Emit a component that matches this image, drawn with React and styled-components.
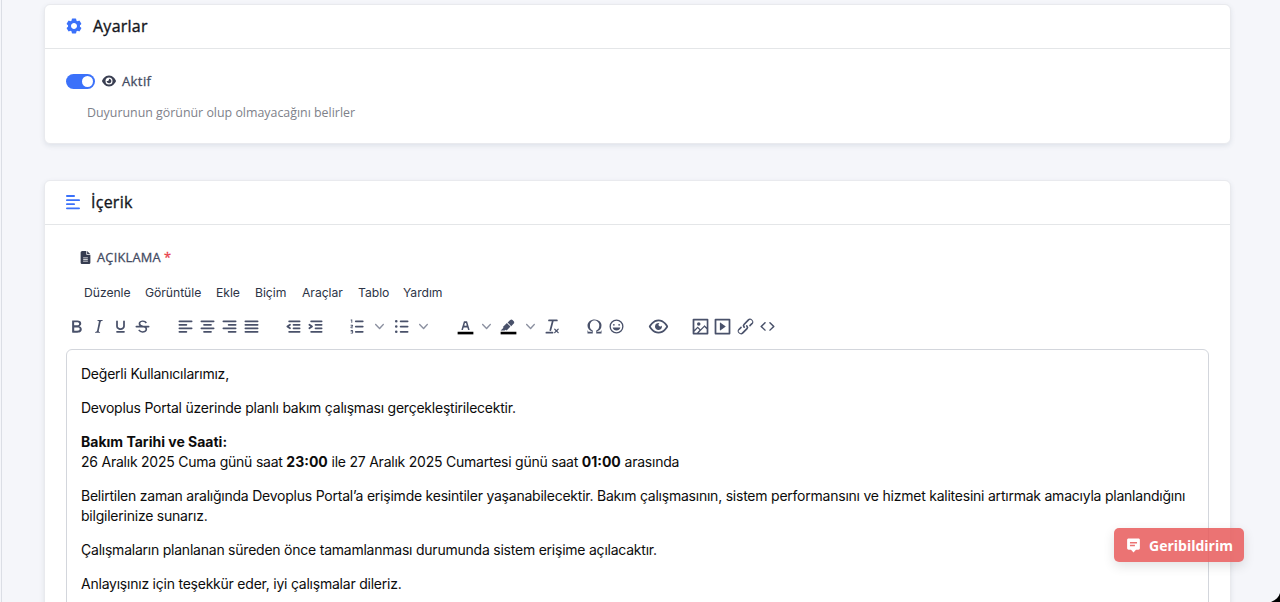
import React from 'react';
import styled, { createGlobalStyle } from 'styled-components';
import { BiSolidCog, BiSolidMessageAltDetail } from 'react-icons/bi';
import { FaEye, FaFileLines } from 'react-icons/fa6';

const GlobalStyle = createGlobalStyle`
  * {
    box-sizing: border-box;
  }

  body {
    margin: 0;
    background: #f5f6fa;
    font-family: 'Open Sans', sans-serif;
    overflow: hidden;
  }
`

const Page = styled.div`
  position: relative;
  height: 602px;
  overflow: hidden;
  padding: 4px 49px 0 42px;
  border-left: 1px solid #dbdee5;
  margin-left: 1px;
`

const Card = styled.section`
  height: ${props => props.$height}px;
  margin-bottom: 36px;
  background: #fff;
  border: 1px solid #e9eaee;
  border-radius: 6px;
  box-shadow: 0 2px 5px rgba(67, 89, 113, 0.12);
`

const CardHeader = styled.header`
  display: flex;
  align-items: center;
  gap: ${props => props.$gap}px;
  height: 44px;
  padding: 0 0 1px 20px;
  border-bottom: 1px solid #e4e6e8;
  color: #3b71fa;
`

const Title = styled.h5`
  margin: 0;
  color: #14161c;
  font-size: 16px;
  font-weight: 400;
  letter-spacing: 0.25px;
  -webkit-text-stroke: 0.35px currentColor;
`

const SwitchRow = styled.label`
  display: flex;
  align-items: center;
  height: 20px;
  margin: 22px 0 0 21px;
  color: #444b62;
  font-size: 13px;
  letter-spacing: 0.4px;
  -webkit-text-stroke: 0.3px currentColor;

  svg {
    margin: 0 6px 0 7px;
    color: #3a3f52;
  }
`

const Switch = styled.span`
  display: flex;
  justify-content: flex-end;
  width: 29px;
  height: 15px;
  padding: 2px;
  border-radius: 8px;
  background: #3b71fa;

  &::after {
    content: '';
    width: 11px;
    height: 11px;
    border-radius: 50%;
    background: #fff;
  }
`

const Hint = styled.p`
  margin: 13px 0 0 42px;
  color: #7e818a;
  font-size: 12.4px;
  line-height: 18px;
`

const FieldLabel = styled.div`
  display: flex;
  align-items: center;
  height: 20px;
  margin: 22px 0 0 34px;
  color: #444b62;
  font-size: 12.8px;
  letter-spacing: 0.25px;
  -webkit-text-stroke: 0.3px currentColor;

  svg {
    margin-right: 5px;
    color: #363c50;
  }

  span {
    margin-left: 3px;
    color: #e8414b;
  }
`

const MenuBar = styled.nav`
  display: flex;
  gap: 15px;
  margin: 16px 0 0 39px;
  color: #2d3446;
  font-family: Inter, sans-serif;
  font-size: 12.2px;
  line-height: 20px;
`

const MenuItem = styled.span`
  width: ${props => props.$width}px;
  white-space: nowrap;
  letter-spacing: -0.05px;
`

const Toolbar = styled.div`
  display: flex;
  align-items: center;
  height: 24px;
  margin: 11px 0 0 20.5px;
`

const ToolGroup = styled.div`
  display: flex;
  align-items: center;
  margin-right: ${props => props.$after}px;
`

const Tool = styled.span`
  display: flex;
  justify-content: center;
  width: 22.1px;
  color: #49516a;

  svg {
    flex: none;
  }
`

const Arrow = styled(Tool)`
  width: 21.4px;
  color: #8b90a0;
`

const Editor = styled.div`
  height: 300px;
  margin: 11px 21px 0;
  padding: 14px 14px;
  border: 1px solid #d3d6dc;
  border-radius: 6px;
  color: #0c0c0c;
  font-family: Inter, sans-serif;
  font-size: 14px;
  line-height: 20px;
`

const Paragraph = styled.p`
  margin: 0 0 14px;
`

const Line = styled.span`
  display: block;
  white-space: nowrap;
  letter-spacing: -0.23px;

  b {
    letter-spacing: 0;
  }
`

const Feedback = styled.button`
  position: absolute;
  right: 36px;
  bottom: 40px;
  display: flex;
  align-items: center;
  gap: 7px;
  width: 130px;
  height: 34px;
  padding: 0 0 0 11px;
  border: 0;
  border-radius: 5px;
  background: rgba(232, 92, 92, 0.86);
  box-shadow: 0 4px 12px rgba(0, 0, 0, 0.12);
  color: #fff;
  font-family: 'Open Sans', sans-serif;
  font-size: 14px;
  font-weight: 700;
`

const Corner = styled.svg`
  position: absolute;
  right: 0;
  bottom: 0;
`

const icons = {
  bold: 'M7.8 19c-.3 0-.5 0-.6-.2l-.2-.5V5.7c0-.2 0-.4.2-.5l.6-.2h5c1.5 0 2.7.3 3.5 1 .7.6 1.1 1.4 1.1 2.5a3 3 0 0 1-.6 1.9c-.4.6-1 1-1.6 1.2.4.1.9.3 1.3.6s.8.7 1 1.2c.4.4.5 1 .5 1.6 0 1.3-.4 2.3-1.3 3-.8.7-2.1 1-3.8 1H7.8Zm5-8.3c.6 0 1.2-.1 1.6-.5.4-.3.6-.7.6-1.3 0-1.1-.8-1.7-2.3-1.7H9.3v3.5h3.4Zm.5 6c.7 0 1.3-.1 1.7-.4.4-.4.6-.9.6-1.5s-.2-1-.7-1.4c-.4-.3-1-.4-2-.4H9.4v3.8h4Z',
  italic: 'm16.7 4.7-.1.9h-.3c-.6 0-1 0-1.4.3-.3.3-.4.6-.5 1.1l-2.1 9.8v.6c0 .5.4.8 1.4.8h.2l-.2.8H8l.2-.8h.2c1.1 0 1.8-.5 2-1.5l2-9.8.1-.5c0-.6-.4-.8-1.4-.8h-.3l.2-.9h5.8Z',
  underline: 'M16 5c.6 0 1 .4 1 1v5.5a4 4 0 0 1-.4 1.8l-1 1.4a5.3 5.3 0 0 1-5.5 1 5 5 0 0 1-1.6-1c-.5-.4-.8-.9-1.1-1.4a4 4 0 0 1-.4-1.8V6c0-.6.4-1 1-1s1 .4 1 1v5.5c0 .3 0 .6.2 1l.6.7a3.3 3.3 0 0 0 2.2.8 3.4 3.4 0 0 0 2.2-.8c.3-.2.4-.5.6-.8l.2-.9V6c0-.6.4-1 1-1ZM8 17h8c.6 0 1 .4 1 1s-.4 1-1 1H8a1 1 0 0 1 0-2Z',
  strike: 'M15.6 8.5c-.5-.7-1-1.1-1.3-1.3-.6-.4-1.3-.6-2-.6-2.7 0-2.8 1.7-2.8 2.1 0 1.6 1.8 2 3.2 2.3 4.4.9 4.6 2.8 4.6 3.9 0 1.4-.7 4.1-5 4.1A6.2 6.2 0 0 1 7 16.4l1.5-1.1c.4.6 1.6 2 3.7 2 1.6 0 2.5-.4 3-1.2.4-.8.3-2-.8-2.6-.7-.4-1.6-.7-2.9-1-1-.2-3.9-.8-3.9-3.6C7.6 6 10.3 5 12.4 5c2.9 0 4.2 1.6 4.7 2.4l-1.5 1.1Z M5 11h14a1 1 0 0 1 0 2H5a1 1 0 0 1 0-2Z',
  left: 'M5 5h14a1 1 0 0 1 0 2H5a1 1 0 1 1 0-2Zm0 4h8a1 1 0 0 1 0 2H5a1 1 0 1 1 0-2Zm0 8h8a1 1 0 0 1 0 2H5a1 1 0 0 1 0-2Zm0-4h14a1 1 0 0 1 0 2H5a1 1 0 0 1 0-2Z',
  center: 'M5 5h14a1 1 0 0 1 0 2H5a1 1 0 1 1 0-2Zm3 4h8a1 1 0 0 1 0 2H8a1 1 0 1 1 0-2Zm0 8h8a1 1 0 0 1 0 2H8a1 1 0 0 1 0-2Zm-3-4h14a1 1 0 0 1 0 2H5a1 1 0 0 1 0-2Z',
  right: 'M5 5h14a1 1 0 0 1 0 2H5a1 1 0 1 1 0-2Zm6 4h8a1 1 0 0 1 0 2h-8a1 1 0 0 1 0-2Zm0 8h8a1 1 0 0 1 0 2h-8a1 1 0 0 1 0-2Zm-6-4h14a1 1 0 0 1 0 2H5a1 1 0 0 1 0-2Z',
  justify: 'M5 5h14a1 1 0 0 1 0 2H5a1 1 0 1 1 0-2Zm0 4h14a1 1 0 0 1 0 2H5a1 1 0 1 1 0-2Zm0 4h14a1 1 0 0 1 0 2H5a1 1 0 0 1 0-2Zm0 4h14a1 1 0 0 1 0 2H5a1 1 0 0 1 0-2Z',
  outdent: 'M7 5h12a1 1 0 0 1 0 2H7a1 1 0 1 1 0-2Zm5 4h7a1 1 0 0 1 0 2h-7a1 1 0 0 1 0-2Zm0 4h7a1 1 0 0 1 0 2h-7a1 1 0 0 1 0-2Zm-5 4h12a1 1 0 0 1 0 2H7a1 1 0 0 1 0-2Zm1.6-3.8a1 1 0 0 1-1.2 1.6l-3-2a1 1 0 0 1 0-1.6l3-2a1 1 0 0 1 1.2 1.6L6.8 12l1.8 1.2Z',
  indent: 'M7 5h12a1 1 0 0 1 0 2H7a1 1 0 1 1 0-2Zm5 4h7a1 1 0 0 1 0 2h-7a1 1 0 0 1 0-2Zm0 4h7a1 1 0 0 1 0 2h-7a1 1 0 0 1 0-2Zm-5 4h12a1 1 0 0 1 0 2H7a1 1 0 0 1 0-2Zm-2.6-3.8L6.2 12l-1.8-1.2a1 1 0 0 1 1.2-1.6l3 2a1 1 0 0 1 0 1.6l-3 2a1 1 0 1 1-1.2-1.6Z',
  ordered: 'M10 17h8a1 1 0 0 1 0 2h-8a1 1 0 0 1 0-2Zm0-6h8a1 1 0 0 1 0 2h-8a1 1 0 0 1 0-2Zm0-6h8a1 1 0 0 1 0 2h-8a1 1 0 1 1 0-2ZM6 4v3.5c0 .3-.2.5-.5.5a.5.5 0 0 1-.5-.5V5h-.5a.5.5 0 0 1 0-1H6Zm-1 8.8.2.2h1.3c.3 0 .5.2.5.5s-.2.5-.5.5H4.9a1 1 0 0 1-.9-1V13c0-.4.3-.8.6-1l1.2-.4.2-.3a.2.2 0 0 0-.2-.2H4.5a.5.5 0 0 1-.5-.5c0-.3.2-.5.5-.5h1.6c.5 0 .9.4.9 1v.1c0 .4-.3.8-.6 1l-1.2.4-.2.3ZM7 17v2c0 .6-.4 1-1 1H4.5a.5.5 0 0 1 0-1h1.2c.2 0 .3-.1.3-.3 0-.2-.1-.3-.3-.3H4.4a.4.4 0 1 1 0-.8h1.3c.2 0 .3-.1.3-.3 0-.2-.1-.3-.3-.3H4.5a.5.5 0 1 1 0-1H6c.6 0 1 .4 1 1Z',
  bullets: 'M11 5h8a1 1 0 0 1 0 2h-8a1 1 0 0 1 0-2Zm0 6h8a1 1 0 0 1 0 2h-8a1 1 0 0 1 0-2Zm0 6h8a1 1 0 0 1 0 2h-8a1 1 0 0 1 0-2ZM4.5 6a1.5 1.5 0 1 1 3 0 1.5 1.5 0 0 1-3 0Zm0 6a1.5 1.5 0 1 1 3 0 1.5 1.5 0 0 1-3 0Zm0 6a1.5 1.5 0 1 1 3 0 1.5 1.5 0 0 1-3 0Z',
  color: 'M8.7 16h-.8a.5.5 0 0 1-.5-.6l2.7-9c.1-.3.3-.4.5-.4h2.8c.2 0 .4.1.5.4l2.7 9a.5.5 0 0 1-.5.6h-.8a.5.5 0 0 1-.4-.4l-.7-2.2c0-.3-.3-.4-.5-.4h-3.4c-.2 0-.4.1-.5.4l-.7 2.2c0 .3-.2.4-.4.4Zm2.6-7.6-.6 2a.5.5 0 0 0 .5.6h1.6a.5.5 0 0 0 .5-.6l-.6-2c0-.3-.3-.4-.5-.4h-.4c-.2 0-.4.1-.5.4Z',
  highlight: 'M7.7 16.7H3l3.3-3.3-.7-.8L10.2 8l4 4.1-4 4.2c-.2.2-.6.2-.8 0l-.6-.7-1.1 1.1Zm5-7.5L11 7.4l3-2.9a2 2 0 0 1 2.6 0L18 6c.7.7.7 2 0 2.7l-2.9 2.9-1.8-1.8-.6-.6Z',
  clear: 'M13.2 6a1 1 0 0 1 0 .2l-2.6 10a1 1 0 0 1-1 .8h-.2a.8.8 0 0 1-.8-1l2.6-10H8a1 1 0 1 1 0-2h9a1 1 0 0 1 0 2h-3.8ZM5 18h7a1 1 0 0 1 0 2H5a1 1 0 0 1 0-2Zm13 1.5L16.5 18 15 19.5a.7.7 0 0 1-1-1l1.5-1.5-1.5-1.5a.7.7 0 0 1 1-1l1.5 1.5 1.5-1.5a.7.7 0 0 1 1 1L17.5 17l1.5 1.5a.7.7 0 0 1-1 1Z',
  omega: 'M15 18h4l1-2v4h-6v-3.3l1.4-1a6 6 0 0 0 1.8-2.9 6.3 6.3 0 0 0-.1-4.1 5.8 5.8 0 0 0-3-3.2c-.6-.3-1.3-.5-2.1-.5a5.1 5.1 0 0 0-3.9 1.8 6.3 6.3 0 0 0-1.3 6 6.2 6.2 0 0 0 1.8 3l1.4.9V20H4v-4l1 2h4v-.5l-2-1L5.4 15A6.5 6.5 0 0 1 4 11c0-1 .2-1.9.6-2.7A7 7 0 0 1 6.3 6C7.1 5.4 8 5 9 4.5c1-.3 2-.5 3.1-.5a8.8 8.8 0 0 1 5.7 2 7 7 0 0 1 1.7 2.3 6 6 0 0 1 .2 4.8c-.2.7-.6 1.3-1 1.9a7.6 7.6 0 0 1-3.6 2.5v.5Z',
  emoji: 'M9 11c.6 0 1-.4 1-1s-.4-1-1-1a1 1 0 0 0-1 1c0 .6.4 1 1 1Zm6 0c.6 0 1-.4 1-1s-.4-1-1-1a1 1 0 0 0-1 1c0 .6.4 1 1 1Zm-3 5.5c2.1 0 4-1.5 4.4-3.5H7.6c.5 2 2.3 3.5 4.4 3.5ZM12 4a8 8 0 1 0 0 16 8 8 0 0 0 0-16Zm0 14.5a6.5 6.5 0 1 1 0-13 6.5 6.5 0 0 1 0 13Z',
  preview: 'M3.5 12.5c.5.8 1.1 1.6 1.8 2.3 2 2 4.2 3.2 6.7 3.2s4.7-1.2 6.7-3.2a16.2 16.2 0 0 0 2.1-2.8 15.7 15.7 0 0 0-2.1-2.8c-2-2-4.2-3.2-6.7-3.2a9.3 9.3 0 0 0-6.7 3.2A16.2 16.2 0 0 0 3.2 12c0 .2.2.3.3.5Zm-2.4-1 .7-1.2L4 7.8C6.2 5.4 8.9 4 12 4c3 0 5.8 1.4 8.1 3.8a18.2 18.2 0 0 1 2.8 3.7v1l-.7 1.2-2.1 2.5c-2.3 2.4-5 3.8-8.1 3.8-3 0-5.8-1.4-8.1-3.8a18.2 18.2 0 0 1-2.8-3.7 1 1 0 0 1 0-1Zm12-3.3a2 2 0 1 0 2.7 2.6 4 4 0 1 1-2.6-2.6Z',
  image: 'm5 15.7 3.3-3.2c.3-.3.7-.3 1 0L12 15l4.1-4c.3-.4.8-.4 1 0l2 1.9V5H5v10.7ZM5 18V19h3l2.8-2.9-2-2L5 17.9Zm14-3-2.5-2.4-6.4 6.5H19v-4ZM4 3h16c.6 0 1 .4 1 1v16c0 .6-.4 1-1 1H4a1 1 0 0 1-1-1V4c0-.6.4-1 1-1Zm6 8a2 2 0 1 0 0-4 2 2 0 0 0 0 4Z',
  media: 'M4 3h16c.6 0 1 .4 1 1v16c0 .6-.4 1-1 1H4a1 1 0 0 1-1-1V4c0-.6.4-1 1-1Zm1 2v14h14V5H5Zm4.8 2.6 5.6 4a.5.5 0 0 1 0 .8l-5.6 4A.5.5 0 0 1 9 16V8a.5.5 0 0 1 .8-.4Z',
  link: 'M6.2 12.3a1 1 0 0 1 1.4 1.4l-2 2a2 2 0 1 0 2.6 2.8l4.8-4.8a1 1 0 0 0 0-1.4 1 1 0 1 1 1.4-1.3 2.9 2.9 0 0 1 0 4L9.6 20a3.9 3.9 0 0 1-5.5-5.5l2-2Zm11.6-.6a1 1 0 0 1-1.4-1.4l2-2a2 2 0 1 0-2.6-2.8L11 10.3a1 1 0 0 0 0 1.4A1 1 0 1 1 9.6 13a2.9 2.9 0 0 1 0-4L14.4 4a3.9 3.9 0 0 1 5.5 5.5l-2 2Z',
  code: 'M9.8 15.7c.3.3.3.8 0 1-.3.4-.9.4-1.2 0l-4.4-4.1a.8.8 0 0 1 0-1.2l4.4-4.2c.3-.3.9-.3 1.2 0 .3.3.3.8 0 1.1L6 12l3.8 3.7ZM14.2 15.7c-.3.3-.3.8 0 1 .4.4.9.4 1.2 0l4.4-4.1c.3-.3.3-.8 0-1.2l-4.4-4.2a.8.8 0 0 0-1.2 0c-.3.3-.3.8 0 1.1L18 12l-3.8 3.7Z',
}

const groups = [
  { after: 20.2, tools: ['bold', 'italic', 'underline', 'strike'] },
  { after: 20.2, tools: ['left', 'center', 'right', 'justify'] },
  { after: 20, tools: ['outdent', 'indent'] },
  { after: 20.3, tools: ['ordered', 'arrow', 'bullets', 'arrow'] },
  { after: 20, tools: ['color', 'arrow', 'highlight', 'arrow', 'clear'] },
  { after: 20.2, tools: ['omega', 'emoji'] },
  { after: 20.2, tools: ['preview'] },
  { after: 0, tools: ['image', 'media', 'link', 'code'] },
]

const menu = [
  ['Düzenle', 46],
  ['Görüntüle', 56],
  ['Ekle', 24],
  ['Biçim', 32],
  ['Araçlar', 41],
  ['Tablo', 30],
  ['Yardım', 40],
]

const TextLinesIcon = () => (
  <svg width="17" height="18" viewBox="0 0 17 18" fill="none" stroke="currentColor" strokeWidth="1.8" strokeLinecap="round">
    <path d="M1.9 3h7.2M1.9 7.2h12.2M1.9 11.2h7.2M1.9 15.3h12.2" />
  </svg>
)

const ToolIcon = ({ name }) => {
  if (name === 'arrow') {
    return (
      <Arrow>
        <svg width="9" height="9" viewBox="0 0 10 10" fill="currentColor">
          <path d="M8.7 2.2c.3-.3.8-.3 1 0 .4.4.4.9 0 1.2L5.7 7.8c-.3.3-.9.3-1.2 0L.2 3.4a.8.8 0 0 1 0-1.2c.3-.3.8-.3 1.1 0L5 6l3.7-3.8Z" />
        </svg>
      </Arrow>
    )
  }

  return (
    <Tool>
      <svg width="21" height="21" viewBox="0 0 24 24" fill="currentColor" fillRule={name === 'strike' ? 'nonzero' : 'evenodd'}>
        <path d={icons[name]} />
        {(name === 'color' || name === 'highlight') && <path d="M3 18h18v3H3z" fill="#000" />}
      </svg>
    </Tool>
  )
}

const App = () => {
  return (
    <Page>
      <GlobalStyle />
      <Card $height={140}>
        <CardHeader $gap={10}>
          <BiSolidCog size={18} />
          <Title>Ayarlar</Title>
        </CardHeader>
        <SwitchRow>
          <Switch />
          <FaEye size={14} />
          Aktif
        </SwitchRow>
        <Hint>Duyurunun görünür olup olmayacağını belirler</Hint>
      </Card>

      <Card $height={500}>
        <CardHeader $gap={9}>
          <TextLinesIcon />
          <Title>İçerik</Title>
        </CardHeader>
        <FieldLabel>
          <FaFileLines size={13} />
          AÇIKLAMA <span>*</span>
        </FieldLabel>
        <MenuBar>
          {menu.map(([label, width]) => (
            <MenuItem key={label} $width={width}>{label}</MenuItem>
          ))}
        </MenuBar>
        <Toolbar>
          {groups.map((group, i) => (
            <ToolGroup key={i} $after={group.after}>
              {group.tools.map((name, j) => <ToolIcon key={j} name={name} />)}
            </ToolGroup>
          ))}
        </Toolbar>
        <Editor>
          <Paragraph>
            <Line>Değerli Kullanıcılarımız,</Line>
          </Paragraph>
          <Paragraph>
            <Line>Devoplus Portal üzerinde planlı bakım çalışması gerçekleştirilecektir.</Line>
          </Paragraph>
          <Paragraph>
            <Line><b>Bakım Tarihi ve Saati:</b></Line>
            <Line>
              26 Aralık 2025 Cuma günü saat <b>23:00</b> ile 27 Aralık 2025 Cumartesi günü saat <b>01:00</b> arasında
            </Line>
          </Paragraph>
          <Paragraph>
            <Line>Belirtilen zaman aralığında Devoplus Portal’a erişimde kesintiler yaşanabilecektir. Bakım çalışmasının, sistem performansını ve hizmet kalitesini artırmak amacıyla planlandığını</Line>
            <Line>bilgilerinize sunarız.</Line>
          </Paragraph>
          <Paragraph>
            <Line>Çalışmaların planlanan süreden önce tamamlanması durumunda sistem erişime açılacaktır.</Line>
          </Paragraph>
          <Paragraph>
            <Line>Anlayışınız için teşekkür eder, iyi çalışmalar dileriz.</Line>
          </Paragraph>
        </Editor>
      </Card>

      <Feedback>
        <BiSolidMessageAltDetail size={17} />
        Geribildirim
      </Feedback>
      <Corner width="9" height="9" viewBox="0 0 9 9">
        <path d="M9 0C8 4 5 7 0 9h9Z" fill="#000" />
      </Corner>
    </Page>
  )
}

export default App;
